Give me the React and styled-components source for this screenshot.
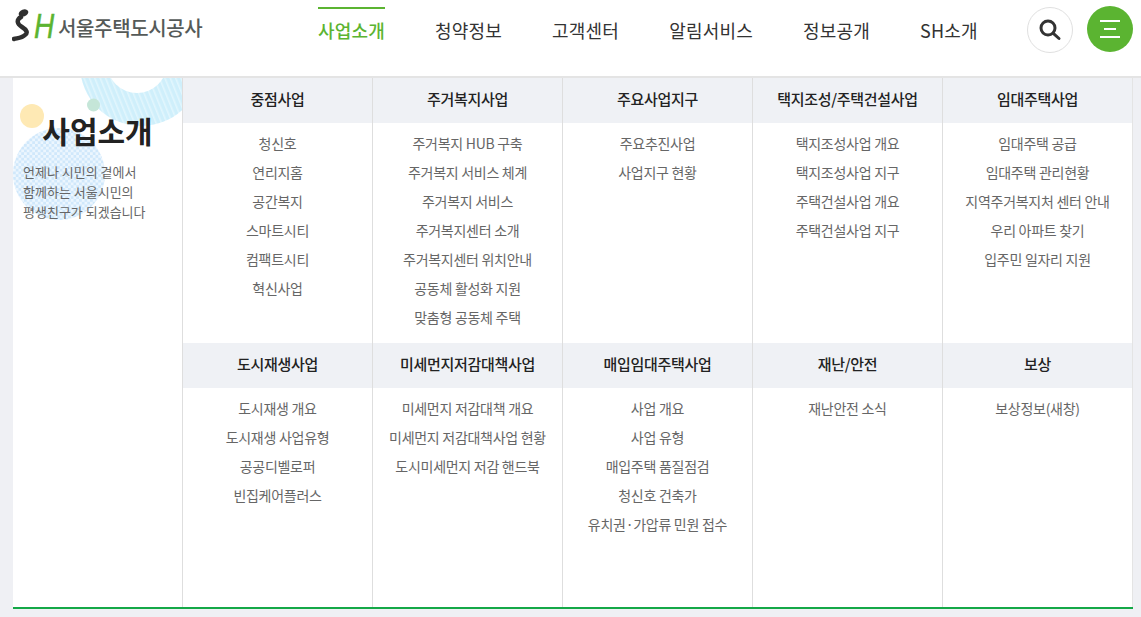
import React from 'react';
import styled, { createGlobalStyle } from 'styled-components';

const NAV = ['사업소개', '청약정보', '고객센터', '알림서비스', '정보공개', 'SH소개'];

const MENUS = [
  { title: '중점사업', items: ['청신호', '연리지홈', '공간복지', '스마트시티', '컴팩트시티', '혁신사업'] },
  { title: '주거복지사업', items: ['주거복지 HUB 구축', '주거복지 서비스 체계', '주거복지 서비스', '주거복지센터 소개', '주거복지센터 위치안내', '공동체 활성화 지원', '맞춤형 공동체 주택'] },
  { title: '주요사업지구', items: ['주요추진사업', '사업지구 현황'] },
  { title: '택지조성/주택건설사업', items: ['택지조성사업 개요', '택지조성사업 지구', '주택건설사업 개요', '주택건설사업 지구'] },
  { title: '임대주택사업', items: ['임대주택 공급', '임대주택 관리현황', '지역주거복지처 센터 안내', '우리 아파트 찾기', '입주민 일자리 지원'] },
  { title: '도시재생사업', items: ['도시재생 개요', '도시재생 사업유형', '공공디벨로퍼', '빈집케어플러스'] },
  { title: '미세먼지저감대책사업', items: ['미세먼지 저감대책 개요', '미세먼지 저감대책사업 현황', '도시미세먼지 저감 핸드북'] },
  { title: '매입임대주택사업', items: ['사업 개요', '사업 유형', '매입주택 품질점검', '청신호 건축가', '유치권·가압류 민원 접수'] },
  { title: '재난/안전', items: ['재난안전 소식'] },
  { title: '보상', items: ['보상정보(새창)'] },
];

const FONT = `"Noto Sans CJK KR", "Noto Sans", sans-serif`;

const Global = createGlobalStyle`
  html, body {
    margin: 0;
    height: 617px;
    overflow: hidden;
    background: #eff0f4;
    font-family: ${FONT};
  }
  ul { list-style: none; margin: 0; padding: 0; }
`;

const App = () => {
  return (
    <>
      <Global />
      <Header>
        <Logo>
          <Runner viewBox="0 0 24 34">
            <ellipse cx="11.5" cy="5" rx="5" ry="3.4" fill="#2f2f2f" transform="rotate(-20 11.5 5)" />
            <path d="M9 9 C4 12 5 16 10 19 C15 22 16 25 13 27 C10 30 6 30 2 31" fill="none" stroke="#2f2f2f" strokeWidth="4.4" strokeLinecap="round" />
          </Runner>
          <LogoH>H</LogoH>
          <LogoName>서울주택도시공사</LogoName>
        </Logo>
        <Nav>
          {NAV.map((name, i) => (
            <NavItem key={name} $active={i === 0}>{name}</NavItem>
          ))}
        </Nav>
        <Actions>
          <SearchButton aria-label="검색">
            <svg width="24" height="24" viewBox="0 0 24 24" fill="none" stroke="#333" strokeWidth="3">
              <circle cx="10" cy="10" r="7" />
              <path d="M15.3 15.3 L21 20.5" strokeLinecap="round" />
            </svg>
          </SearchButton>
          <MenuButton aria-label="전체메뉴">
            <Bar $w={20} />
            <Bar $w={12} />
            <Bar $w={20} />
          </MenuButton>
        </Actions>
      </Header>
      <Panel>
        <Intro>
          <Deco width="169" height="529" viewBox="0 0 169 529">
            <defs>
              <pattern id="stripes" width="5" height="5" patternUnits="userSpaceOnUse" patternTransform="rotate(-22)">
                <rect width="5" height="5" fill="#cfeffb" />
                <rect width="1.6" height="5" fill="#e2f6fd" />
              </pattern>
              <pattern id="checks" width="5.5" height="5.5" patternUnits="userSpaceOnUse">
                <rect width="5.5" height="5.5" fill="#ecf6fe" />
                <rect width="2.75" height="2.75" fill="#d0e8fb" />
                <rect x="2.75" y="2.75" width="2.75" height="2.75" fill="#d0e8fb" />
              </pattern>
            </defs>
            <circle cx="128" cy="-13" r="61" fill="url(#stripes)" />
            <circle cx="124" cy="-15" r="30" fill="#fff" />
            <circle cx="46" cy="96" r="46" fill="url(#checks)" />
            <circle cx="19" cy="38" r="12" fill="#fee9b4" />
            <circle cx="80.5" cy="27" r="6.5" fill="#c5e6d8" />
          </Deco>
          <IntroTitle>사업소개</IntroTitle>
          <IntroText>
            언제나 시민의 곁에서<br />
            함께하는 서울시민의<br />
            평생친구가 되겠습니다
          </IntroText>
        </Intro>
        <MenuGrid>
          {MENUS.map((menu) => (
            <Column key={menu.title}>
              <ColumnTitle>{menu.title}</ColumnTitle>
              <ItemList>
                {menu.items.map((item) => (
                  <Item key={item}>{item}</Item>
                ))}
              </ItemList>
            </Column>
          ))}
        </MenuGrid>
      </Panel>
    </>
  );
};

export default App;

const Header = styled.header`
  display: flex;
  align-items: flex-start;
  height: 76px;
  background: #fff;
  border-bottom: 2px solid #e4e4e4;
`;

const Logo = styled.div`
  display: flex;
  align-items: center;
  width: 318px;
  height: 52px;
  padding-left: 12px;
  box-sizing: border-box;
`;

const Runner = styled.svg`
  width: 24px;
  height: 34px;
  margin-top: -2px;
`;

const LogoH = styled.span`
  display: inline-block;
  width: 20px;
  margin: -1px 0 0 -2px;
  font: italic 400 35px/32px "Liberation Sans", sans-serif;
  -webkit-text-stroke: 0.5px #5bb431;
  color: #5bb431;
  transform: scaleX(0.8);
  transform-origin: left center;
`;

const LogoName = styled.span`
  margin: 2px 0 0 4px;
  font-size: 20px;
  font-weight: 500;
  letter-spacing: -0.35px;
  color: #555a58;
`;

const Nav = styled.nav`
  display: flex;
  gap: 50px;
  width: 709px;
`;

const NavItem = styled.a`
  display: block;
  margin-top: 7px;
  padding-top: 8px;
  border-top: 2px solid ${(p) => (p.$active ? '#5bb431' : 'transparent')};
  font-size: 18px;
  line-height: 27px;
  letter-spacing: 0.2px;
  font-weight: ${(p) => (p.$active ? 500 : 400)};
  color: ${(p) => (p.$active ? '#5bb431' : '#333')};
`;

const Actions = styled.div`
  display: flex;
  align-items: flex-start;
  gap: 14px;
  padding-top: 6px;
`;

const SearchButton = styled.button`
  display: flex;
  align-items: center;
  justify-content: center;
  width: 46px;
  height: 46px;
  margin-top: 1px;
  padding: 0;
  background: #fff;
  border: 1px solid #e0e0e0;
  border-radius: 50%;
`;

const MenuButton = styled.button`
  display: flex;
  flex-direction: column;
  align-items: center;
  justify-content: center;
  gap: 6px;
  width: 46px;
  height: 46px;
  padding: 0;
  background: #5bb431;
  border: 0;
  border-radius: 50%;
`;

const Bar = styled.span`
  display: block;
  width: ${(p) => p.$w}px;
  height: 2px;
  background: #fff;
`;

const Panel = styled.main`
  display: flex;
  width: 1120px;
  margin-left: 13px;
  background: #fff;
  border-bottom: 2px solid #14a847;
`;

const Intro = styled.section`
  position: relative;
  width: 169px;
  flex: none;
  overflow: hidden;
`;

const Deco = styled.svg`
  position: absolute;
  left: 0;
  top: 0;
`;

const IntroTitle = styled.h2`
  position: relative;
  margin: 32px 0 0;
  text-align: center;
  font-size: 30px;
  line-height: 40px;
  font-weight: 700;
  color: #222;
`;

const IntroText = styled.p`
  position: relative;
  margin: 12px 0 0 10px;
  font-size: 13px;
  line-height: 20px;
  color: #666;
`;

const MenuGrid = styled.div`
  display: grid;
  grid-template-columns: repeat(5, 190px);
  grid-template-rows: 265px 264px;
  width: 951px;
  border-right: 1px solid #e4e4e4;
  box-sizing: border-box;
`;

const Column = styled.div`
  display: flex;
  flex-direction: column;
  border-left: 1px solid #dedede;
`;

const ColumnTitle = styled.h3`
  margin: 0;
  height: 45px;
  background: #eff1f5;
  text-align: center;
  font-size: 15px;
  line-height: 41px;
  font-weight: 500;
  letter-spacing: -0.3px;
  color: #222;
`;

const ItemList = styled.ul`
  padding-top: 6px;
`;

const Item = styled.li`
  text-align: center;
  font-size: 14px;
  line-height: 29px;
  letter-spacing: -0.28px;
  color: #666;
`;
